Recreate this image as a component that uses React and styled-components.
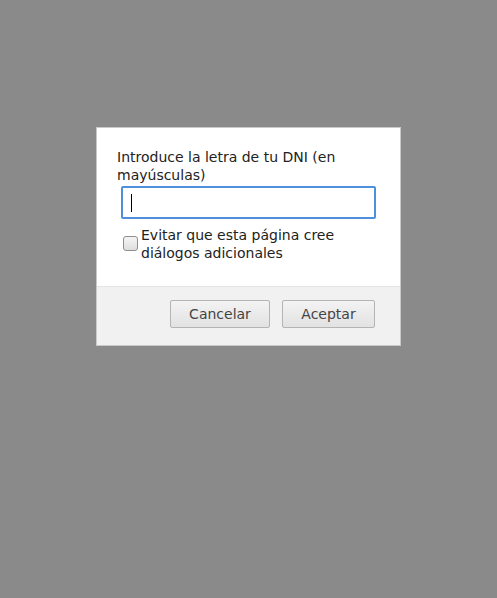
import React from 'react';
import styled, {createGlobalStyle} from 'styled-components';


const GlobalStyle = createGlobalStyle`
  html, body {
    margin: 0;
    padding: 0;
    background: #8a8a8a;
  }
`;


const Overlay = styled.div`
  display: flex;
  justify-content: center;
  align-items: flex-start;
  min-height: 598px;
  padding-top: 127px;
  box-sizing: border-box;
  background: #8a8a8a;
  font-family: 'DejaVu Sans', 'Liberation Sans', sans-serif;
`;

const Dialog = styled.div`
  width: 305px;
  box-sizing: border-box;
  background: #fff;
  border: 1px solid #c9c9c9;
  display: flex;
  flex-direction: column;
`;

const Body = styled.div`
  padding: 20px 20px 24px 20px;
`;

const Message = styled.div`
  font-size: 14px;
  line-height: 18px;
  color: #222;
`;

const TextInput = styled.div`
  margin: 2px 4px 0 4px;
  height: 33px;
  box-sizing: border-box;
  border: 2px solid #4d90dc;
  border-radius: 2px;
  display: flex;
  align-items: center;
  padding-left: 8px;
`;

const Caret = styled.span`
  width: 1px;
  height: 18px;
  background: #000;
`;

const CheckRow = styled.label`
  display: flex;
  align-items: flex-start;
  margin-top: 7px;
  font-size: 14px;
  line-height: 18px;
  color: #222;
`;

const Box = styled.span`
  flex: none;
  width: 15px;
  height: 15px;
  box-sizing: border-box;
  margin: 10px 3px 0 6px;
  border: 1px solid #8f8f8f;
  border-radius: 3px;
  background: linear-gradient(#f4f4f4, #dedede);
`;

const Footer = styled.div`
  display: flex;
  justify-content: flex-end;
  gap: 12px;
  padding: 13px 25px 17px 0;
  background: #f1f1f1;
  border-top: 1px solid #e4e4e4;
`;

const Button = styled.button`
  height: 28px;
  width: ${p => p.width}px;
  box-sizing: border-box;
  padding: 0;
  border: 1px solid #b4b4b4;
  border-radius: 2px;
  background: linear-gradient(#f3f3f3, #e2e2e2);
  font-family: inherit;
  font-size: 14px;
  color: #444;
`;


const App = () =>
  <>
    <GlobalStyle />
    <Overlay>
      <Dialog>
        <Body>
          <Message>Introduce la letra de tu DNI (en mayúsculas)</Message>
          <TextInput><Caret /></TextInput>
          <CheckRow>
            <Box />
            <span>Evitar que esta página cree diálogos adicionales</span>
          </CheckRow>
        </Body>
        <Footer>
          <Button width={100}>Cancelar</Button>
          <Button width={93}>Aceptar</Button>
        </Footer>
      </Dialog>
    </Overlay>
  </>;

export default App;
